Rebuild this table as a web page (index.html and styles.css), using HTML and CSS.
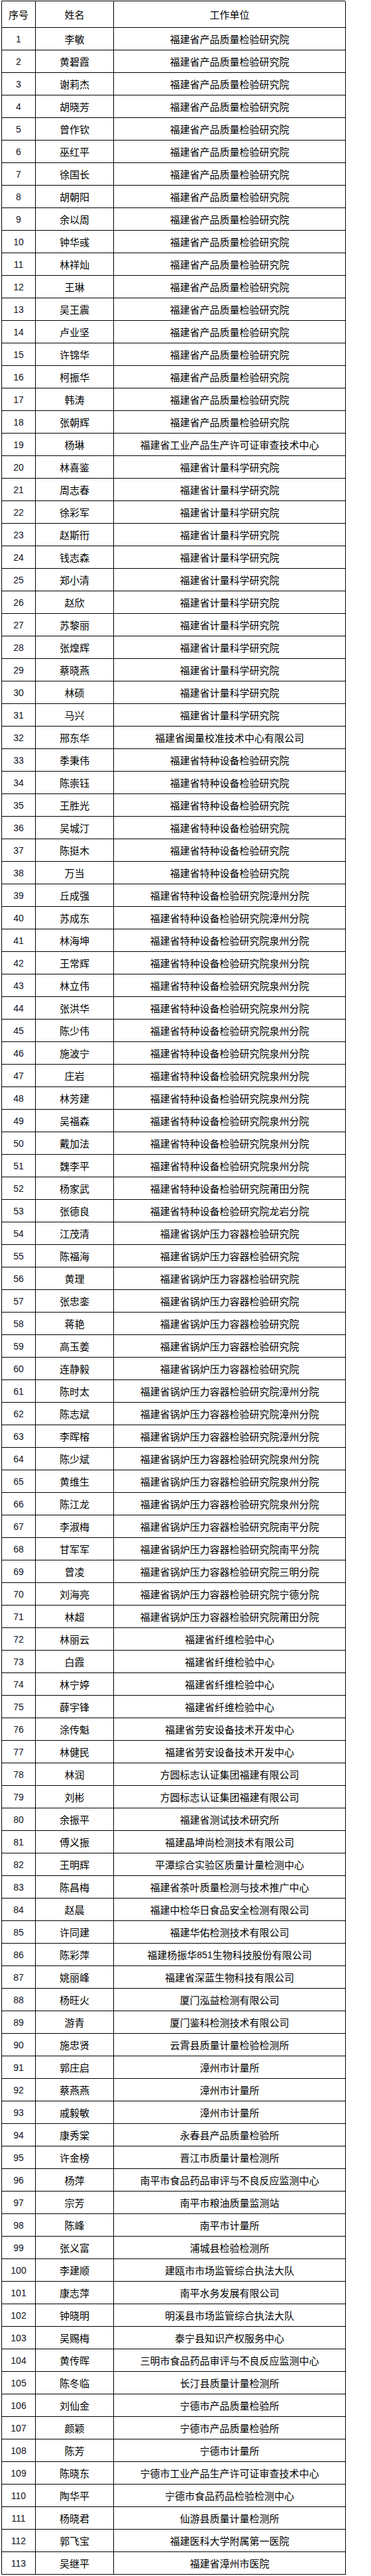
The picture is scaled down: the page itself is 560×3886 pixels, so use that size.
FILE: index.html
```html
<!DOCTYPE html>
<html lang="zh-CN">
<head>
<meta charset="utf-8">
<title>名单</title>
<link rel="stylesheet" href="styles.css">
</head>
<body>
<div class="sheet">
<div class="grid">
<div class="c h no">序号</div><div class="c h">姓名</div><div class="c h">工作单位</div>
<div class="c no">1</div><div class="c">李敏</div><div class="c">福建省产品质量检验研究院</div>
<div class="c no">2</div><div class="c">黄碧霞</div><div class="c">福建省产品质量检验研究院</div>
<div class="c no">3</div><div class="c">谢莉杰</div><div class="c">福建省产品质量检验研究院</div>
<div class="c no">4</div><div class="c">胡晓芳</div><div class="c">福建省产品质量检验研究院</div>
<div class="c no">5</div><div class="c">曾作钦</div><div class="c">福建省产品质量检验研究院</div>
<div class="c no">6</div><div class="c">巫红平</div><div class="c">福建省产品质量检验研究院</div>
<div class="c no">7</div><div class="c">徐国长</div><div class="c">福建省产品质量检验研究院</div>
<div class="c no">8</div><div class="c">胡朝阳</div><div class="c">福建省产品质量检验研究院</div>
<div class="c no">9</div><div class="c">余以周</div><div class="c">福建省产品质量检验研究院</div>
<div class="c no">10</div><div class="c">钟华彧</div><div class="c">福建省产品质量检验研究院</div>
<div class="c no">11</div><div class="c">林祥灿</div><div class="c">福建省产品质量检验研究院</div>
<div class="c no">12</div><div class="c">王琳</div><div class="c">福建省产品质量检验研究院</div>
<div class="c no">13</div><div class="c">吴王震</div><div class="c">福建省产品质量检验研究院</div>
<div class="c no">14</div><div class="c">卢业坚</div><div class="c">福建省产品质量检验研究院</div>
<div class="c no">15</div><div class="c">许锦华</div><div class="c">福建省产品质量检验研究院</div>
<div class="c no">16</div><div class="c">柯振华</div><div class="c">福建省产品质量检验研究院</div>
<div class="c no">17</div><div class="c">韩涛</div><div class="c">福建省产品质量检验研究院</div>
<div class="c no">18</div><div class="c">张朝辉</div><div class="c">福建省产品质量检验研究院</div>
<div class="c no">19</div><div class="c">杨琳</div><div class="c">福建省工业产品生产许可证审查技术中心</div>
<div class="c no">20</div><div class="c">林喜鉴</div><div class="c">福建省计量科学研究院</div>
<div class="c no">21</div><div class="c">周志春</div><div class="c">福建省计量科学研究院</div>
<div class="c no">22</div><div class="c">徐彩军</div><div class="c">福建省计量科学研究院</div>
<div class="c no">23</div><div class="c">赵斯衎</div><div class="c">福建省计量科学研究院</div>
<div class="c no">24</div><div class="c">钱志森</div><div class="c">福建省计量科学研究院</div>
<div class="c no">25</div><div class="c">郑小清</div><div class="c">福建省计量科学研究院</div>
<div class="c no">26</div><div class="c">赵欣</div><div class="c">福建省计量科学研究院</div>
<div class="c no">27</div><div class="c">苏黎丽</div><div class="c">福建省计量科学研究院</div>
<div class="c no">28</div><div class="c">张煌辉</div><div class="c">福建省计量科学研究院</div>
<div class="c no">29</div><div class="c">蔡晓燕</div><div class="c">福建省计量科学研究院</div>
<div class="c no">30</div><div class="c">林硕</div><div class="c">福建省计量科学研究院</div>
<div class="c no">31</div><div class="c">马兴</div><div class="c">福建省计量科学研究院</div>
<div class="c no">32</div><div class="c">邢东华</div><div class="c">福建省闽量校准技术中心有限公司</div>
<div class="c no">33</div><div class="c">季秉伟</div><div class="c">福建省特种设备检验研究院</div>
<div class="c no">34</div><div class="c">陈崇钰</div><div class="c">福建省特种设备检验研究院</div>
<div class="c no">35</div><div class="c">王胜光</div><div class="c">福建省特种设备检验研究院</div>
<div class="c no">36</div><div class="c">吴城汀</div><div class="c">福建省特种设备检验研究院</div>
<div class="c no">37</div><div class="c">陈挺木</div><div class="c">福建省特种设备检验研究院</div>
<div class="c no">38</div><div class="c">万当</div><div class="c">福建省特种设备检验研究院</div>
<div class="c no">39</div><div class="c">丘成强</div><div class="c">福建省特种设备检验研究院漳州分院</div>
<div class="c no">40</div><div class="c">苏成东</div><div class="c">福建省特种设备检验研究院漳州分院</div>
<div class="c no">41</div><div class="c">林海坤</div><div class="c">福建省特种设备检验研究院泉州分院</div>
<div class="c no">42</div><div class="c">王常辉</div><div class="c">福建省特种设备检验研究院泉州分院</div>
<div class="c no">43</div><div class="c">林立伟</div><div class="c">福建省特种设备检验研究院泉州分院</div>
<div class="c no">44</div><div class="c">张洪华</div><div class="c">福建省特种设备检验研究院泉州分院</div>
<div class="c no">45</div><div class="c">陈少伟</div><div class="c">福建省特种设备检验研究院泉州分院</div>
<div class="c no">46</div><div class="c">施波宁</div><div class="c">福建省特种设备检验研究院泉州分院</div>
<div class="c no">47</div><div class="c">庄岩</div><div class="c">福建省特种设备检验研究院泉州分院</div>
<div class="c no">48</div><div class="c">林芳建</div><div class="c">福建省特种设备检验研究院泉州分院</div>
<div class="c no">49</div><div class="c">吴福森</div><div class="c">福建省特种设备检验研究院泉州分院</div>
<div class="c no">50</div><div class="c">戴加法</div><div class="c">福建省特种设备检验研究院泉州分院</div>
<div class="c no">51</div><div class="c">魏李平</div><div class="c">福建省特种设备检验研究院泉州分院</div>
<div class="c no">52</div><div class="c">杨家武</div><div class="c">福建省特种设备检验研究院莆田分院</div>
<div class="c no">53</div><div class="c">张德良</div><div class="c">福建省特种设备检验研究院龙岩分院</div>
<div class="c no">54</div><div class="c">江茂清</div><div class="c">福建省锅炉压力容器检验研究院</div>
<div class="c no">55</div><div class="c">陈福海</div><div class="c">福建省锅炉压力容器检验研究院</div>
<div class="c no">56</div><div class="c">黄理</div><div class="c">福建省锅炉压力容器检验研究院</div>
<div class="c no">57</div><div class="c">张忠銮</div><div class="c">福建省锅炉压力容器检验研究院</div>
<div class="c no">58</div><div class="c">蒋艳</div><div class="c">福建省锅炉压力容器检验研究院</div>
<div class="c no">59</div><div class="c">高玉姜</div><div class="c">福建省锅炉压力容器检验研究院</div>
<div class="c no">60</div><div class="c">连静毅</div><div class="c">福建省锅炉压力容器检验研究院</div>
<div class="c no">61</div><div class="c">陈时太</div><div class="c">福建省锅炉压力容器检验研究院漳州分院</div>
<div class="c no">62</div><div class="c">陈志斌</div><div class="c">福建省锅炉压力容器检验研究院漳州分院</div>
<div class="c no">63</div><div class="c">李晖榕</div><div class="c">福建省锅炉压力容器检验研究院漳州分院</div>
<div class="c no">64</div><div class="c">陈少斌</div><div class="c">福建省锅炉压力容器检验研究院泉州分院</div>
<div class="c no">65</div><div class="c">黄维生</div><div class="c">福建省锅炉压力容器检验研究院泉州分院</div>
<div class="c no">66</div><div class="c">陈江龙</div><div class="c">福建省锅炉压力容器检验研究院泉州分院</div>
<div class="c no">67</div><div class="c">李淑梅</div><div class="c">福建省锅炉压力容器检验研究院南平分院</div>
<div class="c no">68</div><div class="c">甘军军</div><div class="c">福建省锅炉压力容器检验研究院南平分院</div>
<div class="c no">69</div><div class="c">曾凌</div><div class="c">福建省锅炉压力容器检验研究院三明分院</div>
<div class="c no">70</div><div class="c">刘海亮</div><div class="c">福建省锅炉压力容器检验研究院宁德分院</div>
<div class="c no">71</div><div class="c">林超</div><div class="c">福建省锅炉压力容器检验研究院莆田分院</div>
<div class="c no">72</div><div class="c">林丽云</div><div class="c">福建省纤维检验中心</div>
<div class="c no">73</div><div class="c">白霞</div><div class="c">福建省纤维检验中心</div>
<div class="c no">74</div><div class="c">林宁婷</div><div class="c">福建省纤维检验中心</div>
<div class="c no">75</div><div class="c">薛宇锋</div><div class="c">福建省纤维检验中心</div>
<div class="c no">76</div><div class="c">涂传魁</div><div class="c">福建省劳安设备技术开发中心</div>
<div class="c no">77</div><div class="c">林健民</div><div class="c">福建省劳安设备技术开发中心</div>
<div class="c no">78</div><div class="c">林润</div><div class="c">方圆标志认证集团福建有限公司</div>
<div class="c no">79</div><div class="c">刘彬</div><div class="c">方圆标志认证集团福建有限公司</div>
<div class="c no">80</div><div class="c">余振平</div><div class="c">福建省测试技术研究所</div>
<div class="c no">81</div><div class="c">傅义振</div><div class="c">福建晶坤尚检测技术有限公司</div>
<div class="c no">82</div><div class="c">王明辉</div><div class="c">平潭综合实验区质量计量检测中心</div>
<div class="c no">83</div><div class="c">陈昌梅</div><div class="c">福建省茶叶质量检测与技术推广中心</div>
<div class="c no">84</div><div class="c">赵晨</div><div class="c">福建中检华日食品安全检测有限公司</div>
<div class="c no">85</div><div class="c">许同建</div><div class="c">福建华佑检测技术有限公司</div>
<div class="c no">86</div><div class="c">陈彩萍</div><div class="c">福建杨振华 <span class="num">851</span> 生物科技股份有限公司</div>
<div class="c no">87</div><div class="c">姚丽峰</div><div class="c">福建省深蓝生物科技有限公司</div>
<div class="c no">88</div><div class="c">杨旺火</div><div class="c">厦门泓益检测有限公司</div>
<div class="c no">89</div><div class="c">游青</div><div class="c">厦门鉴科检测技术有限公司</div>
<div class="c no">90</div><div class="c">施忠贤</div><div class="c">云霄县质量计量检验检测所</div>
<div class="c no">91</div><div class="c">郭庄启</div><div class="c">漳州市计量所</div>
<div class="c no">92</div><div class="c">蔡燕燕</div><div class="c">漳州市计量所</div>
<div class="c no">93</div><div class="c">戚毅敏</div><div class="c">漳州市计量所</div>
<div class="c no">94</div><div class="c">康秀棠</div><div class="c">永春县产品质量检验所</div>
<div class="c no">95</div><div class="c">许金榜</div><div class="c">晋江市质量计量检测所</div>
<div class="c no">96</div><div class="c">杨萍</div><div class="c">南平市食品药品审评与不良反应监测中心</div>
<div class="c no">97</div><div class="c">宗芳</div><div class="c">南平市粮油质量监测站</div>
<div class="c no">98</div><div class="c">陈峰</div><div class="c">南平市计量所</div>
<div class="c no">99</div><div class="c">张义富</div><div class="c">浦城县检验检测所</div>
<div class="c no">100</div><div class="c">李建顺</div><div class="c">建瓯市市场监管综合执法大队</div>
<div class="c no">101</div><div class="c">康志萍</div><div class="c">南平水务发展有限公司</div>
<div class="c no">102</div><div class="c">钟晓明</div><div class="c">明溪县市场监管综合执法大队</div>
<div class="c no">103</div><div class="c">吴赐梅</div><div class="c">泰宁县知识产权服务中心</div>
<div class="c no">104</div><div class="c">黄传晖</div><div class="c">三明市食品药品审评与不良反应监测中心</div>
<div class="c no">105</div><div class="c">陈冬临</div><div class="c">长汀县质量计量检测所</div>
<div class="c no">106</div><div class="c">刘仙金</div><div class="c">宁德市产品质量检验所</div>
<div class="c no">107</div><div class="c">颜颖</div><div class="c">宁德市产品质量检验所</div>
<div class="c no">108</div><div class="c">陈芳</div><div class="c">宁德市计量所</div>
<div class="c no">109</div><div class="c">陈晓东</div><div class="c">宁德市工业产品生产许可证审查技术中心</div>
<div class="c no">110</div><div class="c">陶华平</div><div class="c">宁德市食品药品检验检测中心</div>
<div class="c no">111</div><div class="c">杨晓君</div><div class="c">仙游县质量计量检测所</div>
<div class="c no">112</div><div class="c">郭飞宝</div><div class="c">福建医科大学附属第一医院</div>
<div class="c no">113</div><div class="c">吴继平</div><div class="c">福建省漳州市医院</div>
</div>
</div>
</body>
</html>
```

FILE: styles.css
```css
html, body {
  margin: 0;
  padding: 0;
  background: #ffffff;
}

body {
  font-family: "Noto Sans CJK SC", "Noto Sans", sans-serif;
  color: #000000;
}

.sheet {
  padding: 1px 0 0 2px;
}

.grid {
  display: grid;
  grid-template-columns: 51px 118px 350px;
  grid-auto-rows: 34px;
  width: 519px;
  border-left: 1px solid #000;
  border-top: 1px solid #000;
  box-sizing: border-box;
}

.c {
  box-sizing: border-box;
  border-right: 1px solid #000;
  border-bottom: 1px solid #000;
  display: flex;
  align-items: center;
  justify-content: center;
  font-size: 15px;
  line-height: 1;
  white-space: nowrap;
}

.h {
  height: 40px;
  align-self: start;
}

.grid > .h {
  grid-row: 1;
}

.grid {
  grid-template-rows: 40px;
}

.no {
  font-family: "Liberation Sans", Arial, sans-serif;
  font-size: 14px;
  color: #111122;
}

.h.no {
  font-family: "Noto Sans CJK SC", "Noto Sans", sans-serif;
  font-size: 15px;
  color: #000;
}

.num {
  font-family: "Liberation Sans", Arial, sans-serif;
  font-size: 14px;
}
```
